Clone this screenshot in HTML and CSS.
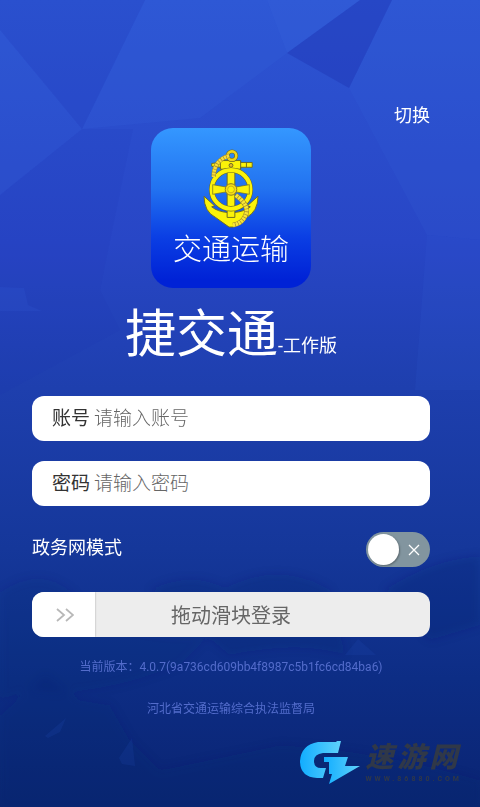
FILE: index.html
```
<!DOCTYPE html>
<html lang="zh-CN">
<head>
  <meta charset="UTF-8">
  <meta name="viewport" content="width=device-width, initial-scale=1.0">
  <title>捷交通-工作版</title>
  <link rel="stylesheet" href="styles.css">
</head>
<body>
  <svg class="backdrop" viewBox="0 0 480 807" preserveAspectRatio="none" aria-hidden="true">
    <defs>
      <filter id="soft"><feGaussianBlur stdDeviation="4"/></filter>
    </defs>
    <g fill="#3a6be0">
      <path d="M145 0H267L287 53L200 118L82 129Z" opacity=".16"/>
      <path d="M267 0H360L287 53Z" opacity=".24"/>
      <path d="M0 30L82 129L0 195Z" opacity=".12"/>
      <path d="M392 0H480V240L427 235L349 88Z" opacity=".12"/>
      <path d="M427 235L480 240V390H415Z" opacity=".1"/>
      <path d="M0 287L24 288L28 305L42 311H0Z" opacity=".16"/>
    </g>
    <g fill="#1b2fae">
      <path d="M360 0H392L349 88L287 53Z" opacity=".36"/>
      <path d="M0 30V0H145L82 129Z" opacity=".14"/>
      <path d="M82 129H133L100 290L120 330L0 395V195Z" opacity=".1"/>
    </g>
    <g fill="#0a2268" filter="url(#soft)">
      <path d="M0 592Q40 565 72 592Q110 640 210 635L180 665Q90 700 30 690L0 700Z" opacity=".14"/>
      <path d="M150 590Q190 570 225 588Q280 560 330 590L345 655Q300 640 230 655Z" opacity=".2"/>
      <path d="M385 590Q430 560 480 556V625L430 640Z" opacity=".24"/>
      <path d="M0 715L45 675L80 700L110 705L130 740L160 770L280 745Q380 750 480 780V807H0Z" opacity=".16"/>
    </g>
    <g fill="#2450b8" opacity=".18">
      <path d="M45 736L66 718L60 732L48 738Z"/>
      <path d="M119 758L132 738L135 766L122 764Z"/>
      <path d="M345 655L358 639L376 655Z"/>
    </g>
  </svg>

  <main class="login">
    <button class="switch-link" type="button">切换</button>

    <div class="app-icon">
      <svg class="anchor" viewBox="0 0 60 84" aria-hidden="true">
        <g stroke="#6c6a22" stroke-width="1" stroke-linejoin="round">
          <path d="M2 50L13 60L10 61Q16 66 27 67V60H33V67Q44 66 50 61L47 60L58 50Q58 66 46 72L32 82H28L14 72Q2 66 2 50Z" fill="#fbf309"/>
          <rect x="26" y="22" width="8" height="50" fill="#fbf309"/>
          <path d="M10 16L19 15V13H40V15L52 15V20L40 20V22H19V20L10 19Z" fill="#fbf309"/>
          <path d="M19 14V22M40 14V22M46 15V20" fill="none"/>
          <circle cx="30" cy="18" r="2" fill="#e5b62a"/>
        </g>
        <circle cx="31" cy="8" r="4.500" fill="none" stroke="#6c6a22" stroke-width="4"/>
        <circle cx="31" cy="8" r="4.500" fill="none" stroke="#efd51c" stroke-width="2.700"/>
        <circle cx="30" cy="43" r="20" fill="none" stroke="#6c6a22" stroke-width="5.500"/>
        <circle cx="30" cy="43" r="20" fill="none" stroke="#fbf309" stroke-width="4.400"/>
        <path d="M11 38L25 40.500H35L49 38V48L35 45.500H25L11 48Z" fill="#fbf309" stroke="#6c6a22" stroke-width=".7"/>
        <circle cx="30" cy="43" r="6" fill="#f5df16" stroke="#8a7620"/>
        <circle cx="30" cy="43" r="3.500" fill="#fbf309" stroke="#b99a20" stroke-width=".7"/>
        <g fill="none">
          <path d="M28 8Q12 13 12 30" stroke="#a08a2a" stroke-width="4.600"/>
          <path d="M28 8Q12 13 12 30" stroke="#f8de3c" stroke-width="3.600" stroke-dasharray="2.400 .7"/>
          <path d="M35 49Q50 60 45 70Q42 78 32 80" stroke="#a08a2a" stroke-width="5"/>
          <path d="M35 49Q50 60 45 70Q42 78 32 80" stroke="#f8e638" stroke-width="3.900" stroke-dasharray="2.400 .7"/>
        </g>
      </svg>
      <span class="app-icon-text">交通运输</span>
    </div>

    <h1 class="title">捷交通<small>-工作版</small></h1>

    <form class="form">
      <div class="field">
        <label for="account">账号</label>
        <input id="account" type="text" placeholder="请输入账号">
      </div>
      <div class="field">
        <label for="password">密码</label>
        <input id="password" type="password" placeholder="请输入密码">
      </div>

      <div class="mode">
        <label for="govMode">政务网模式</label>
        <span class="toggle">
          <input id="govMode" type="checkbox">
          <svg class="toggle-off" viewBox="0 0 12 12" aria-hidden="true"><path d="M1 1L11 11M11 1L1 11"/></svg>
        </span>
      </div>

      <div class="slide">
        <input id="slide" type="range" min="0" max="100" value="0">
        <label for="slide">拖动滑块登录</label>
        <svg class="chevrons" viewBox="0 0 18 14" aria-hidden="true"><path d="M1 1L8 7L1 13M10 1L17 7L10 13"/></svg>
      </div>
    </form>

    <p class="note">当前版本：4.0.7(9a736cd609bb4f8987c5b1fc6cd84ba6)</p>
    <p class="note">河北省交通运输综合执法监督局</p>
  </main>

  <div class="watermark">
    <svg class="watermark-logo" viewBox="0 0 62 44" aria-hidden="true">
      <defs>
        <linearGradient id="wm" x1="0" x2="1">
          <stop offset="0" stop-color="#12adff"/>
          <stop offset="1" stop-color="#5fd2fb"/>
        </linearGradient>
      </defs>
      <path d="M19 1H37L38 0H42L39 12H24Q15 13 15 20Q15 27 22 27H27L24 37H18Q1 36 1 20Q2 4 19 1Z" fill="url(#wm)"/>
      <path d="M25 16H49L46 25H61L30 43L33 33H30V21H25Z" fill="url(#wm)"/>
    </svg>
    <div class="watermark-text">
      <span class="watermark-name">速游网</span>
      <span class="watermark-url">WWW.86880.COM</span>
    </div>
  </div>
</body>
</html>
```
FILE: styles.css
```
* {
  box-sizing: border-box;
}
body {
  margin: 0;
  min-height: 100vh;
  position: relative;
  display: flex;
  flex-direction: column;
  font-family: Roboto, "Noto Sans CJK SC", sans-serif;
  color: #fff;
  background: linear-gradient(to bottom, #2d55d3 0%, #2846c6 30%, #1e3fae 48%, #15379a 68%, #0d2d85 84%, #0a2472 100%);
}
.backdrop {
  position: absolute;
  inset: 0;
  width: 100%;
  height: 100%;
}
.login {
  position: relative;
  display: flex;
  flex-direction: column;
  padding: 102px 50px 0 32px;
}
.switch-link {
  align-self: flex-end;
  padding: 2px 0 0;
  border: none;
  background: none;
  color: #fff;
  font-family: inherit;
  font-size: 18px;
  line-height: 24px;
  cursor: pointer;
}
.app-icon {
  align-self: center;
  width: 160px;
  height: 160px;
  padding-top: 20px;
  border-radius: 22px;
  background: linear-gradient(to bottom, #3497ff 0%, #2272f0 38%, #0b3fe4 68%, #0022d6 95%);
  display: flex;
  flex-direction: column;
  align-items: center;
}
.anchor {
  width: 58px;
  height: 81px;
}
.app-icon-text {
  font-family: "Noto Sans CJK SC", sans-serif;
  font-size: 29px;
  line-height: 36px;
  font-weight: 300;
}
.title {
  margin: 9px 0 0;
  text-align: center;
  font-size: 51px;
  line-height: 76px;
  font-weight: 400;
}
.title small {
  font-size: 18px;
}
.form {
  display: flex;
  flex-direction: column;
  gap: 20px;
  margin-top: 12px;
}
.field {
  display: flex;
  align-items: baseline;
  gap: 4px;
  height: 45px;
  padding: 0 20px;
  border-radius: 12px;
  background: #fff;
  color: #333;
  font-family: "Noto Sans CJK SC", sans-serif;
  font-size: 19px;
  line-height: 40px;
}
.field input {
  flex: 1;
  min-width: 0;
  height: 40px;
  padding: 0;
  border: none;
  outline: none;
  background: none;
  font-family: inherit;
  font-size: 19px;
  font-weight: 300;
}
.field input::placeholder {
  color: #666;
}
.mode {
  display: flex;
  align-items: center;
  justify-content: space-between;
  margin: 6px 0 5px;
  font-size: 18px;
}
.mode label {
  line-height: 24px;
  padding-bottom: 4px;
}
.toggle {
  position: relative;
  display: flex;
}
.toggle input {
  appearance: none;
  width: 64px;
  height: 35px;
  margin: 0;
  padding: 2px;
  border-radius: 18px;
  background: #82959f;
  cursor: pointer;
}
.toggle input::before {
  content: "";
  display: block;
  width: 31px;
  height: 31px;
  border-radius: 50%;
  background: #fff;
  box-shadow: 1px 1px 2px rgba(0,0,0,0.3);
}
.toggle input:checked {
  background: #2f7df0;
}
.toggle input:checked::before {
  margin-left: auto;
}
.toggle-off {
  position: absolute;
  top: 12px;
  right: 10px;
  width: 12px;
  height: 12px;
  fill: none;
  stroke: #fff;
  stroke-width: 1.3;
  pointer-events: none;
}
.slide {
  position: relative;
  height: 45px;
  border-radius: 12px;
  overflow: hidden;
  background: #ededed;
}
.slide input {
  appearance: none;
  display: block;
  width: 100%;
  height: 45px;
  margin: 0;
  background: none;
  outline: none;
}
.slide input::-webkit-slider-thumb {
  appearance: none;
  width: 63px;
  height: 45px;
  background: #fff;
  box-shadow: 0 0 2px rgba(0,0,0,0.3);
}
.slide label {
  position: absolute;
  inset: 0;
  text-align: center;
  font-size: 20px;
  line-height: 48px;
  color: #666;
  pointer-events: none;
}
.chevrons {
  position: absolute;
  top: 16px;
  left: 24px;
  width: 18px;
  height: 14px;
  fill: none;
  stroke: #b8b8b8;
  stroke-width: 1.8;
  pointer-events: none;
}
.note {
  margin: 20px 0 0;
  text-align: center;
  font-size: 12px;
  line-height: 20px;
  color: #536ccb;
}
.note + .note {
  margin-top: 22px;
}
.watermark {
  position: relative;
  display: flex;
  align-self: flex-end;
  gap: 4px;
  margin: auto 18px 22px 0;
  color: #303848;
}
.watermark-logo {
  width: 62px;
  height: 44px;
}
.watermark-text {
  display: flex;
  flex-direction: column;
}
.watermark-name {
  font-size: 28px;
  line-height: 34px;
  font-weight: 900;
  font-style: italic;
  letter-spacing: 4px;
}
.watermark-url {
  font-size: 7px;
  line-height: 8px;
  font-weight: 700;
  letter-spacing: 3px;
}
```
